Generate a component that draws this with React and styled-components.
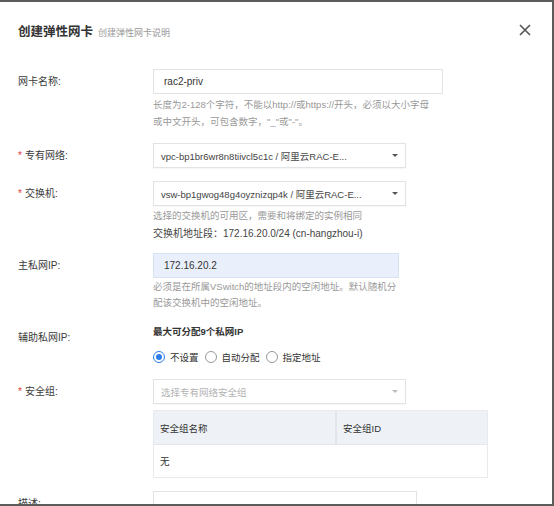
import styled, { createGlobalStyle } from "styled-components";

const GlobalStyle = createGlobalStyle`
  html, body {
    margin: 0;
    padding: 0;
    background: #5c5c5c;
  }
  body {
    font-family: "Liberation Sans", "Noto Sans CJK SC", sans-serif;
    color: #333;
  }
`;

const Dialog = styled.div`
  box-sizing: border-box;
  width: 552px;
  height: 502px;
  overflow: hidden;
  background: #fff;
  margin-top: 2px;
`;

const Header = styled.div`
  display: flex;
  align-items: center;
  justify-content: space-between;
  padding: 17px 20px 0 18px;
  height: 22px;
`;

const Title = styled.h1`
  margin: 0;
  font-size: 12.5px;
  font-weight: bold;
  color: #333;
  display: flex;
  align-items: baseline;
  gap: 5px;
`;

const SubTitle = styled.span`
  font-size: 9px;
  font-weight: normal;
  color: #999;
`;

const CloseBtn = styled.button`
  border: none;
  background: none;
  padding: 0;
  width: 14px;
  height: 14px;
  display: flex;
  cursor: pointer;
`;

const Form = styled.div`
  padding: 28px 0 0 18px;
`;

const Row = styled.div`
  display: grid;
  grid-template-columns: 135px 1fr;
  margin-bottom: ${(p) => p.$mb || 13}px;
`;

const Label = styled.div`
  font-size: 10px;
  line-height: 25px;
  color: #3a3a3a;
  padding-top: ${(p) => p.$pt || 0}px;
`;

const Star = styled.span`
  color: #e0403a;
  margin-right: 3px;
`;

const Field = styled.div`
  display: flex;
  flex-direction: column;
  align-items: flex-start;
`;

const Input = styled.div`
  box-sizing: border-box;
  width: ${(p) => p.$w}px;
  height: 25px;
  border: 1px solid ${(p) => (p.$filled ? "#d6e2f3" : "#e1e3e6")};
  background: ${(p) => (p.$filled ? "#e9f0fb" : "#fff")};
  padding-left: 10px;
  font-size: 10px;
  display: flex;
  align-items: center;
  color: #333;
`;

const Select = styled.div`
  box-sizing: border-box;
  width: ${(p) => p.$w}px;
  height: 25px;
  border: 1px solid #e1e3e6;
  background: #fff;
  padding: 0 7px 0 7px;
  font-size: 9.5px;
  display: flex;
  align-items: center;
  justify-content: space-between;
  color: ${(p) => (p.$placeholder ? "#b3b3b3" : "#444")};
  box-shadow: 0 1px 1px rgba(0, 0, 0, 0.03);
`;

const Arrow = styled.span`
  width: 0;
  height: 0;
  border-left: 3px solid transparent;
  border-right: 3px solid transparent;
  border-top: 3px solid ${(p) => (p.$light ? "#bbb" : "#555")};
`;

const Help = styled.div`
  font-size: ${(p) => (p.$dark ? 10 : 9.5)}px;
  line-height: ${(p) => p.$lh || 17}px;
  margin-top: ${(p) => p.$mt || 0}px;
  color: ${(p) => (p.$dark ? "#444" : "#999")};
  white-space: nowrap;
`;

const Strong = styled.div`
  font-size: 9.5px;
  font-weight: bold;
  line-height: 18px;
  color: #333;
`;

const RadioGroup = styled.div`
  display: flex;
  align-items: center;
  height: 20px;
  margin-top: 6px;
  gap: 6px;
`;

const RadioItem = styled.label`
  display: flex;
  align-items: center;
  gap: 5px;
  font-size: 9.5px;
  color: #333;
`;

const RadioDot = styled.span`
  box-sizing: border-box;
  width: 12px;
  height: 12px;
  border-radius: 50%;
  border: 1px solid ${(p) => (p.$on ? "#2b7de9" : "#999")};
  display: flex;
  align-items: center;
  justify-content: center;
  &::after {
    content: "";
    width: 6px;
    height: 6px;
    border-radius: 50%;
    background: ${(p) => (p.$on ? "#2b7de9" : "transparent")};
  }
`;

const Table = styled.div`
  box-sizing: border-box;
  margin-top: 6px;
  width: 335px;
  border: 1px solid #e8eaed;
`;

const THead = styled.div`
  display: grid;
  grid-template-columns: 183px 1fr;
  background: #eef2f6;
  height: 33px;
  border-bottom: 1px solid #e3e6ea;
`;

const Th = styled.div`
  font-size: 9.5px;
  color: #333;
  display: flex;
  align-items: center;
  padding-left: 6px;
  border-right: ${(p) => (p.$last ? "none" : "2px solid #e2e6eb")};
`;

const TBody = styled.div`
  height: 32px;
  display: flex;
  align-items: center;
  padding-left: 6px;
  font-size: 9.5px;
  color: #333;
`;

const radios = [
  { text: "不设置", on: true },
  { text: "自动分配", on: false },
  { text: "指定地址", on: false },
];

const App = () => {
  return (
    <>
      <GlobalStyle />
      <Dialog>
        <Header>
          <Title>
            创建弹性网卡<SubTitle>创建弹性网卡说明</SubTitle>
          </Title>
          <CloseBtn aria-label="close">
            <svg width="14" height="14" viewBox="0 0 14 14">
              <path d="M2 2 L12 12 M12 2 L2 12" stroke="#555" strokeWidth="1.6" />
            </svg>
          </CloseBtn>
        </Header>

        <Form>
          <Row>
            <Label>网卡名称:</Label>
            <Field>
              <Input $w={290}>rac2-priv</Input>
              <Help $mt={2}>
                长度为2-128个字符，不能以http://或https://开头，必须以大小字母
                <br />
                或中文开头，可包含数字，"_"或"-"。
              </Help>
            </Field>
          </Row>

          <Row>
            <Label>
              <Star>*</Star>专有网络:
            </Label>
            <Field>
              <Select $w={253}>
                vpc-bp1br6wr8n8tiivcl5c1c / 阿里云RAC-E...
                <Arrow />
              </Select>
            </Field>
          </Row>

          <Row $mb={10}>
            <Label>
              <Star>*</Star>交换机:
            </Label>
            <Field>
              <Select $w={253}>
                vsw-bp1gwog48g4oyznizqp4k / 阿里云RAC-E...
                <Arrow />
              </Select>
              <Help $mt={1} $lh={18}>选择的交换机的可用区，需要和将绑定的实例相同</Help>
              <Help $lh={18} $dark>
                交换机地址段：172.16.20.0/24 (cn-hangzhou-i)
              </Help>
            </Field>
          </Row>

          <Row $mb={12}>
            <Label>主私网IP:</Label>
            <Field>
              <Input $w={246} $filled>
                172.16.20.2
              </Input>
              <Help $mt={1} $lh={16}>
                必须是在所属VSwitch的地址段内的空闲地址。默认随机分
                <br />
                配该交换机中的空闲地址。
              </Help>
            </Field>
          </Row>

          <Row $mb={12}>
            <Label $pt={2}>辅助私网IP:</Label>
            <Field>
              <Strong>最大可分配9个私网IP</Strong>
              <RadioGroup>
                {radios.map((r) => (
                  <RadioItem key={r.text}>
                    <RadioDot $on={r.on} />
                    {r.text}
                  </RadioItem>
                ))}
              </RadioGroup>
            </Field>
          </Row>

          <Row>
            <Label>
              <Star>*</Star>安全组:
            </Label>
            <Field>
              <Select $w={253} $placeholder>
                选择专有网络安全组
                <Arrow $light />
              </Select>
              <Table>
                <THead>
                  <Th>安全组名称</Th>
                  <Th $last>安全组ID</Th>
                </THead>
                <TBody>无</TBody>
              </Table>
            </Field>
          </Row>

          <Row>
            <Label>描述:</Label>
            <Field>
              <Input $w={264} />
            </Field>
          </Row>
        </Form>
      </Dialog>
    </>
  );
};

export default App;
